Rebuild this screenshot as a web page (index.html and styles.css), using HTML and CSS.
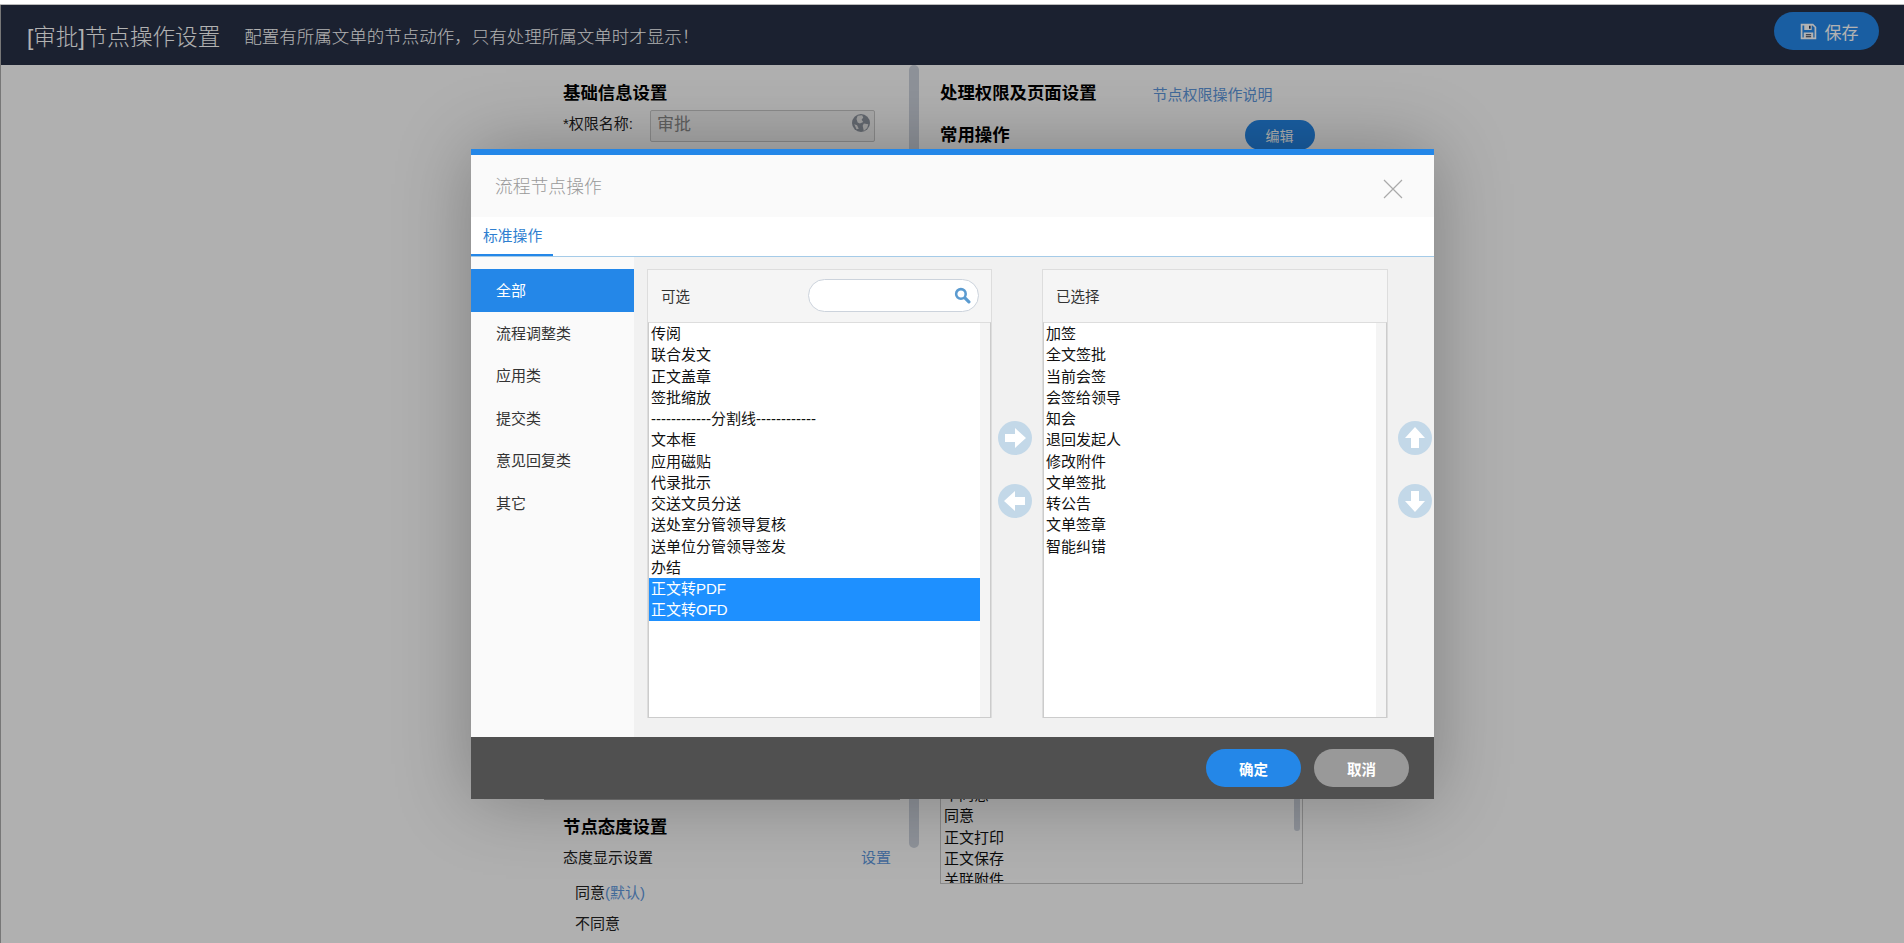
FILE: index.html
```html
<!DOCTYPE html>
<html lang="zh-CN">
<head>
    <meta charset="UTF-8">
    <title>节点操作设置</title>
    <link rel="stylesheet" href="styles.css">
</head>
<body>
    <div class="top-strip"></div>
    <div class="page-head">
        <span class="page-title">[审批]节点操作设置</span>
        <span class="page-tip">配置有所属文单的节点动作，只有处理所属文单时才显示！</span>
        <button class="save-btn">
            <svg class="save-icon" viewBox="0 0 16 16"><path fill="none" stroke="#fff" stroke-width="1.6" d="M1.5 1.5h10.5l2.5 2.5v10.500H1.500z"/><path fill="#fff" d="M4 1.500h7v5H4zM3.500 9h9v5.500h-9z"/><path fill="#283046" d="M8.500 2.500h1.500v3H8.500zM5.500 10.500h5v1h-5zM5.500 12.500h5v1h-5z"/></svg>
            保存
        </button>
    </div>

    <div class="page-main">
        <div class="col-left">
            <div class="base-block">
                <h2 class="sec-title">基础信息设置</h2>
                <div class="name-row">
                    <label class="name-label">*权限名称:</label>
                    <div class="name-input">
                        <span>审批</span>
                        <svg class="globe" viewBox="0 0 16 16"><circle cx="8" cy="8" r="8" fill="#8f95a0"/><path fill="#e6e6e6" d="M5 1.500l4-.5 1 2-1.500 2 1.500 2-3 1.500-2-1-1-3zM10.500 8.500l4 .5-1 3.500-3 2.500-1-4.500zM2 9l2.500 1 1.500 3-2 .5z"/></svg>
                    </div>
                </div>
            </div>
            <div class="attitude-block">
                <h2 class="sec-title">节点态度设置</h2>
                <div class="attitude-head"><span>态度显示设置</span><a class="link">设置</a></div>
                <div class="attitude-item">同意<a class="link">(默认)</a></div>
                <div class="attitude-item">不同意</div>
            </div>
        </div>
        <div class="page-scroll"></div>
        <div class="col-right">
            <div class="right-head">
                <h2 class="sec-title">处理权限及页面设置</h2>
                <a class="link">节点权限操作说明</a>
            </div>
            <div class="common-head">
                <h2 class="sec-title">常用操作</h2>
                <button class="edit-btn">编辑</button>
            </div>
            <div class="common-list">
                <div class="common-rows">
                    <div>不同意</div>
                    <div>同意</div>
                    <div>正文打印</div>
                    <div>正文保存</div>
                    <div>关联附件</div>
                </div>
                <div class="common-track"><div class="common-thumb"></div></div>
            </div>
        </div>
    </div>

    <div class="mask"></div>

    <div class="dialog">
        <div class="dialog-head">
            <span class="dialog-title">流程节点操作</span>
            <svg class="dialog-close" viewBox="0 0 20 20"><path fill="none" stroke="#aaa" stroke-width="1.2" d="M1 1l18 18M19 1L1 19"/></svg>
        </div>
        <div class="tabs"><span class="tab-on">标准操作</span></div>
        <div class="dialog-body">
            <ul class="side-menu">
                <li class="on">全部</li>
                <li>流程调整类</li>
                <li>应用类</li>
                <li>提交类</li>
                <li>意见回复类</li>
                <li>其它</li>
            </ul>
            <div class="pick-panel panel-left">
                <div class="pick-head">
                    <span>可选</span>
                    <div class="search-box">
                        <svg class="search-icon" viewBox="0 0 16 16"><circle cx="6.500" cy="6.500" r="4.500" fill="none" stroke="#5b9bd0" stroke-width="2.400"/><path stroke="#5b9bd0" stroke-width="3" stroke-linecap="round" d="M10.500 10.500l3.500 3.500"/></svg>
                    </div>
                </div>
                <div class="pick-list">
                    <ul class="pick-rows">
                        <li>传阅</li>
                        <li>联合发文</li>
                        <li>正文盖章</li>
                        <li>签批缩放</li>
                        <li>------------分割线------------</li>
                        <li>文本框</li>
                        <li>应用磁贴</li>
                        <li>代录批示</li>
                        <li>交送文员分送</li>
                        <li>送处室分管领导复核</li>
                        <li>送单位分管领导签发</li>
                        <li>办结</li>
                        <li class="sel">正文转PDF</li>
                        <li class="sel">正文转OFD</li>
                    </ul>
                    <div class="pick-track"></div>
                </div>
            </div>
            <div class="arrow-col col-move">
                <svg class="arrow" viewBox="0 0 34 34"><circle cx="17" cy="17" r="17" fill="#c3d8e8"/><path fill="#fff" d="M7 13h10V7l11 10-11 10v-6H7z"/></svg>
                <svg class="arrow" viewBox="0 0 34 34"><circle cx="17" cy="17" r="17" fill="#c3d8e8"/><path fill="#fff" d="M27 13H17V7L6 17l11 10v-6h10z"/></svg>
            </div>
            <div class="pick-panel panel-right">
                <div class="pick-head"><span>已选择</span></div>
                <div class="pick-list">
                    <ul class="pick-rows">
                        <li>加签</li>
                        <li>全文签批</li>
                        <li>当前会签</li>
                        <li>会签给领导</li>
                        <li>知会</li>
                        <li>退回发起人</li>
                        <li>修改附件</li>
                        <li>文单签批</li>
                        <li>转公告</li>
                        <li>文单签章</li>
                        <li>智能纠错</li>
                    </ul>
                    <div class="pick-track"></div>
                </div>
            </div>
            <div class="arrow-col col-order">
                <svg class="arrow" viewBox="0 0 34 34"><circle cx="17" cy="17" r="17" fill="#c3d8e8"/><path fill="#fff" d="M13 27V17H7L17 6l10 11h-6v10z"/></svg>
                <svg class="arrow" viewBox="0 0 34 34"><circle cx="17" cy="17" r="17" fill="#c3d8e8"/><path fill="#fff" d="M13 7v10H7l10 11 10-11h-6V7z"/></svg>
            </div>
        </div>
        <div class="dialog-foot">
            <button class="foot-btn ok">确定</button>
            <button class="foot-btn cancel">取消</button>
        </div>
    </div>
</body>
</html>
```

FILE: styles.css
```css
* {
    margin: 0;
    padding: 0;
    box-sizing: border-box;
}

html, body {
    height: 943px;
    overflow: hidden;
}

body {
    position: relative;
    width: 1904px;
    background: #fcfcfc;
    font-family: "Liberation Sans", "Noto Sans CJK SC", sans-serif;
    font-size: 15px;
    color: #222;
}

ul {
    list-style: none;
}

button {
    border: none;
    font-family: inherit;
}

.top-strip {
    height: 5px;
    background: #fff;
    border-bottom: 1px solid #bbb;
    border-top: 3px solid #fff;
}

.page-head {
    display: flex;
    align-items: center;
    height: 60px;
    padding: 0 25px 0 27px;
    background: #283046;
    color: #fff;
}

.page-title {
    font-size: 22.6px;
    font-weight: 300;
}

.page-tip {
    margin-left: 24px;
    font-size: 17.5px;
    font-weight: 300;
}

.save-btn {
    display: flex;
    align-items: center;
    justify-content: center;
    gap: 8px;
    width: 105px;
    height: 38px;
    margin-left: auto;
    margin-top: -8px;
    padding-left: 5px;
    border-radius: 19px;
    background: #2487e8;
    color: #fff;
    font-size: 17px;
}

.save-icon {
    width: 17px;
    height: 17px;
}

.page-main {
    display: flex;
    height: 878px;
    padding-left: 563px;
}

.col-left {
    width: 328px;
}

.sec-title {
    flex: none;
    font-size: 17.4px;
    font-weight: 700;
    color: #000;
    line-height: 24px;
    white-space: nowrap;
}

.base-block {
    height: 735px;
    margin: 0 -9px 0 -19px;
    padding: 16px 0 0 19px;
    border-bottom: 1px solid #aaa;
}

.name-row {
    display: flex;
    margin-top: 5px;
}

.name-label {
    width: 87px;
    font-size: 15px;
    line-height: 28px;
}

.name-input {
    display: flex;
    align-items: flex-start;
    justify-content: space-between;
    width: 225px;
    height: 32px;
    padding: 1px 4px 0 6px;
    border: 1px solid #c8c8c8;
    border-radius: 2px;
    background: #f2f2f2;
    color: #888;
    font-size: 17px;
    line-height: 26px;
}

.globe {
    width: 18px;
    height: 18px;
    margin-top: 2px;
}

.attitude-block {
    padding-top: 15px;
}

.attitude-head {
    display: flex;
    justify-content: space-between;
    align-items: center;
    margin-top: 7px;
    line-height: 24px;
}

.link {
    color: #5f98dc;
}

.attitude-item {
    margin-top: 11px;
    margin-bottom: -4px;
    padding-left: 12px;
    line-height: 24px;
}

.page-scroll {
    width: 10px;
    height: 783px;
    margin-left: 18px;
    border-radius: 5px;
    background: #ccd2dc;
}

.col-right {
    width: 363px;
    margin-left: 21px;
}

.right-head {
    display: flex;
    align-items: center;
    gap: 56px;
    padding-top: 16px;
}

.common-head {
    display: flex;
    align-items: center;
    height: 30px;
    margin-top: 15px;
}

.edit-btn {
    flex: none;
    width: 70px;
    height: 30px;
    margin-left: 235px;
    border-radius: 15px;
    background: #2487e8;
    color: #fff;
    font-size: 14px;
}

.common-list {
    display: flex;
    height: 101px;
    margin-top: 633px;
    border: 1px solid #c5c5c5;
    overflow: hidden;
}

.common-rows {
    flex: 1;
    padding-left: 3px;
    line-height: 21.25px;
    color: #111;
}

.common-track {
    width: 8px;
}

.common-thumb {
    width: 6px;
    height: 47px;
    border-radius: 3px;
    background: #ccd2dc;
}

.mask {
    position: absolute;
    top: 5px;
    left: 0;
    right: 0;
    bottom: 0;
    border-left: 1px solid #777;
    background: rgba(0, 0, 0, 0.3);
}

.dialog {
    position: absolute;
    top: 149px;
    left: 471px;
    display: flex;
    flex-direction: column;
    width: 963px;
    height: 650px;
    border-top: 6px solid #2487e8;
    background: #f1f1f1;
    box-shadow: 0 0 70px rgba(0, 0, 0, 0.28);
}

.dialog-head {
    display: flex;
    align-items: center;
    justify-content: space-between;
    height: 62px;
    padding: 0 31px 0 24px;
    background: #fafafa;
}

.dialog-title {
    margin-top: -2px;
    font-size: 17.8px;
    color: #999;
    font-weight: 300;
}

.dialog-close {
    width: 20px;
    height: 20px;
    margin-top: 6px;
}

.tabs {
    height: 40px;
    padding-left: 12px;
    background: #fff;
    border-bottom: 1px solid #a5cbe8;
}

.tab-on {
    display: inline-block;
    height: 39px;
    margin-left: -12px;
    padding: 0 11px 0 12px;
    border-bottom: 2px solid #2487e8;
    color: #2f7fd0;
    font-size: 14.8px;
    line-height: 39px;
}

.dialog-body {
    display: flex;
    flex: 1;
}

.side-menu {
    width: 163px;
    padding-top: 12px;
    background: #fafafa;
}

.side-menu li {
    height: 42.5px;
    padding-left: 25px;
    line-height: 44px;
    color: #333;
}

.side-menu li.on {
    background: #2487e8;
    color: #fff;
}

.pick-panel {
    width: 345px;
    height: 449px;
    margin-top: 12px;
    border: 1px solid #ddd;
    background: #f5f5f5;
}

.panel-left {
    margin-left: 13px;
}

.pick-head {
    display: flex;
    align-items: center;
    justify-content: space-between;
    height: 52px;
    padding: 0 12px 2px 13px;
    font-size: 14.5px;
    color: #333;
}

.search-box {
    display: flex;
    align-items: center;
    justify-content: flex-end;
    width: 171px;
    height: 33px;
    padding-right: 7px;
    border: 1px solid #ccd3dc;
    border-radius: 17px;
    background: #fff;
}

.search-icon {
    width: 17px;
    height: 17px;
}

.pick-list {
    display: flex;
    height: 396px;
    border: 1px solid #ccc;
    border-top-color: #ddd;
    background: #fff;
}

.pick-rows {
    flex: 1;
    line-height: 21.25px;
    color: #111;
}

.pick-rows li {
    height: 21.25px;
    padding-left: 2px;
}

.pick-rows li.sel {
    background: #1e90ff;
    color: #fff;
}

.pick-track {
    width: 10px;
    background: #f4f4f4;
}

.arrow-col {
    display: flex;
    flex-direction: column;
    gap: 29px;
    padding-top: 164px;
}

.col-move {
    width: 50px;
    padding-left: 6px;
}

.col-order {
    flex: 1;
    padding-left: 10px;
}

.arrow {
    width: 34px;
    height: 34px;
}

.panel-right {
    width: 346px;
}

.dialog-foot {
    display: flex;
    align-items: center;
    justify-content: flex-end;
    gap: 13px;
    height: 62px;
    padding-right: 25px;
    background: #505050;
}

.foot-btn {
    width: 95px;
    height: 38px;
    border-radius: 19px;
    color: #fff;
    font-size: 14.5px;
    font-weight: 700;
}

.foot-btn.ok {
    background: #2487e8;
}

.foot-btn.cancel {
    background: #999;
}
```
